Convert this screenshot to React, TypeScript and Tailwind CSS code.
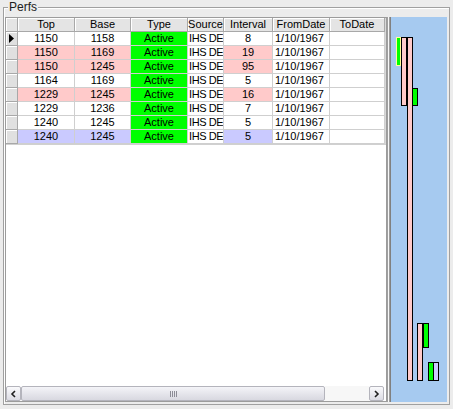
import React from "react";

type Row = {
  top: string;
  base: string;
  interval: string;
  bg: string;
  selected?: boolean;
};

const rows: Row[] = [
  { top: "1150", base: "1158", interval: "8", bg: "bg-white", selected: true },
  { top: "1150", base: "1169", interval: "19", bg: "bg-[#ffcaca]" },
  { top: "1150", base: "1245", interval: "95", bg: "bg-[#ffcaca]" },
  { top: "1164", base: "1169", interval: "5", bg: "bg-white" },
  { top: "1229", base: "1245", interval: "16", bg: "bg-[#ffcaca]" },
  { top: "1229", base: "1236", interval: "7", bg: "bg-white" },
  { top: "1240", base: "1245", interval: "5", bg: "bg-white" },
  { top: "1240", base: "1245", interval: "5", bg: "bg-[#cacaff]" },
];

function HeaderCell({ w, children }: { w: string; children?: React.ReactNode }) {
  return (
    <div
      className={`${w} h-[14px] shrink-0 border-r border-b border-[#a8a8a8] bg-[#e4e4e4] text-center leading-[13px] shadow-[inset_1px_1px_0_#ffffff]`}
    >
      {children}
    </div>
  );
}

function Cell({
  w,
  bg,
  align,
  children,
}: {
  w: string;
  bg: string;
  align: string;
  children?: React.ReactNode;
}) {
  return (
    <div
      className={`${w} ${bg} ${align} h-[14px] shrink-0 overflow-hidden whitespace-nowrap border-r border-b border-[#cfcfcf] leading-[13px]`}
    >
      {children}
    </div>
  );
}

function Chart() {
  const bars = [
    { x: 5, y: 20, w: 5, h: 29, fill: "#00ff00", stroke: "#ffff99" },
    { x: 10, y: 20, w: 6, h: 69, fill: "#ffcaca", stroke: "#000000" },
    { x: 16, y: 20, w: 6, h: 344, fill: "#ffcaca", stroke: "#000000" },
    { x: 21, y: 71, w: 6, h: 18, fill: "#00ff00", stroke: "#000000" },
    { x: 26, y: 306, w: 6, h: 58, fill: "#ffcaca", stroke: "#000000" },
    { x: 32, y: 306, w: 6, h: 25, fill: "#00ff00", stroke: "#000000" },
    { x: 37, y: 345, w: 6, h: 19, fill: "#00ff00", stroke: "#000000" },
    { x: 42, y: 345, w: 6, h: 19, fill: "#cacaff", stroke: "#000000" },
  ];
  return (
    <svg width="56" height="385" viewBox="0 0 56 385" className="block">
      {bars.map((b, i) => (
        <rect
          key={i}
          x={b.x + 0.5}
          y={b.y + 0.5}
          width={b.w - 1}
          height={b.h - 1}
          fill={b.fill}
          stroke={b.stroke}
          strokeWidth={1}
          shapeRendering="crispEdges"
        />
      ))}
    </svg>
  );
}

function ScrollButton({ dir }: { dir: "left" | "right" }) {
  return (
    <div className="flex h-[15px] w-[15px] shrink-0 items-center justify-center rounded-[2px] border border-[#b4b4bc] bg-gradient-to-b from-[#fafafc] to-[#dcdce4]">
      <svg width="7" height="8" viewBox="0 0 7 8">
        {dir === "left" ? (
          <path d="M5 1 L2 4 L5 7" fill="none" stroke="#202020" strokeWidth="1.6" />
        ) : (
          <path d="M2 1 L5 4 L2 7" fill="none" stroke="#202020" strokeWidth="1.6" />
        )}
      </svg>
    </div>
  );
}

export default function App() {
  return (
    <div className="relative h-[409px] w-[453px] overflow-hidden bg-[#ececec] pl-[3px] pt-[7px] font-['Liberation_Sans',Arial,sans-serif] text-[11px] text-black">
      <div className="relative h-[398px] w-[447px] border border-[#a0a0a0] pt-[9px] pr-[1px] shadow-[inset_1px_1px_0_#ffffff]">
        <span className="absolute left-[4px] top-[-8px] bg-[#ececec] px-[1px] text-[12px] leading-[14px] text-[#202020]">
          Perfs
        </span>
        <div className="ml-[1px] flex h-[385px]">
          {/* Grid */}
          <div className="flex h-[385px] w-[382px] shrink-0 flex-col border border-[#9c9c9c] bg-white">
            <div className="flex bg-[#e4e4e4]">
              <HeaderCell w="w-[12px]" />
              <HeaderCell w="w-[57px]">Top</HeaderCell>
              <HeaderCell w="w-[56px]">Base</HeaderCell>
              <HeaderCell w="w-[57px]">Type</HeaderCell>
              <HeaderCell w="w-[36px]">Source</HeaderCell>
              <HeaderCell w="w-[49px]">Interval</HeaderCell>
              <HeaderCell w="w-[57px]">FromDate</HeaderCell>
              <HeaderCell w="w-[55px]">ToDate</HeaderCell>
              <div className="h-[14px] flex-1 bg-[#d8d8d8]" />
            </div>
            {rows.map((r, i) => (
              <div key={i} className="flex">
                <div className="flex h-[14px] w-[12px] shrink-0 items-center justify-center border-r border-b border-[#a8a8a8] bg-[#e0e0e0] shadow-[inset_1px_1px_0_#ffffff]">
                  {r.selected && (
                    <svg width="5" height="9" viewBox="0 0 5 9">
                      <path d="M0 0 L5 4.5 L0 9 Z" fill="#000" />
                    </svg>
                  )}
                </div>
                <Cell w="w-[57px]" bg={r.bg} align="text-center">
                  {r.top}
                </Cell>
                <Cell w="w-[56px]" bg={r.bg} align="text-center">
                  {r.base}
                </Cell>
                <Cell w="w-[57px]" bg="bg-[#00ff00]" align="text-center">
                  Active
                </Cell>
                <Cell w="w-[36px]" bg="bg-white" align="text-left pl-[1px] tracking-[-0.4px]">
                  IHS DE
                </Cell>
                <Cell w="w-[49px]" bg={r.bg} align="text-center">
                  {r.interval}
                </Cell>
                <Cell w="w-[57px]" bg="bg-white" align="text-left pl-[2px]">
                  1/10/1967
                </Cell>
                <Cell w="w-[55px]" bg="bg-white" align="text-left" />
                <div className="h-[14px] flex-1 bg-[#d8d8d8]" />
              </div>
            ))}
            <div className="flex-1 border-t border-[#d0d0d0] bg-white" />
            <div className="flex h-[15px] items-stretch pr-[2px]">
              <ScrollButton dir="left" />
              <div className="flex w-[304px] items-center justify-center rounded-[2px] border border-[#b4b4bc] bg-gradient-to-b from-[#f4f4f8] to-[#d8d8e0]">
                <div className="flex gap-[1px]">
                  <div className="h-[6px] w-[1px] bg-[#8c8c96]" />
                  <div className="h-[6px] w-[1px] bg-[#8c8c96]" />
                  <div className="h-[6px] w-[1px] bg-[#8c8c96]" />
                  <div className="h-[6px] w-[1px] bg-[#8c8c96]" />
                </div>
              </div>
              <div className="flex-1 bg-[#f7f7f7]" />
              <ScrollButton dir="right" />
            </div>
          </div>
          {/* Splitter */}
          <div className="flex h-[385px] w-[4px] shrink-0 bg-[#e4e4e4]">
            <div className="w-[1px] bg-[#a0a0a0]" />
            <div className="w-[1px] bg-[#f8f8f8]" />
            <div className="w-[1px] bg-[#a0a0a0]" />
            <div className="w-[1px] bg-[#808080]" />
          </div>
          {/* Chart panel */}
          <div className="h-[385px] w-[56px] shrink-0 bg-[#a6caf0]">
            <Chart />
          </div>
        </div>
      </div>
    </div>
  );
}
